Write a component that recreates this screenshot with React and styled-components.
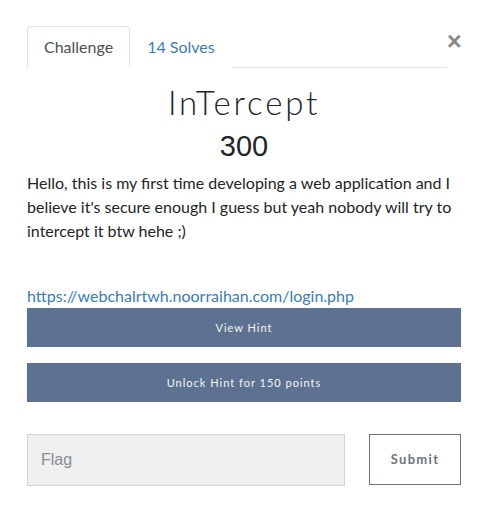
import React from 'react';
import styled, { createGlobalStyle } from 'styled-components';

const Global = createGlobalStyle`
  body {
    margin: 0;
    background: #fff;
    font-family: Lato, "Noto Sans", sans-serif;
    color: #212529;
  }
`;

const Modal = styled.div`
  padding: 26px 26px 0 27px;
`;

const Header = styled.div`
  display: flex;
  align-items: flex-start;
`;

const Tabs = styled.div`
  flex: 1;
  display: flex;
  border-bottom: 1px solid #dee2e6;
`;

const Tab = styled.div`
  padding: 8px 16px;
  font-size: 16px;
  line-height: 24px;
  margin-bottom: -1px;
  border: 1px solid ${({ active }) => (active ? '#dee2e6' : 'transparent')};
  border-bottom-color: ${({ active }) => (active ? '#fff' : 'transparent')};
  border-radius: 4px 4px 0 0;
  color: ${({ active }) => (active ? '#495057' : '#3a7dbb')};
  background: #fff;
`;

const Close = styled.div`
  width: 14px;
  font-family: "Liberation Sans", Arial, sans-serif;
  font-weight: bold;
  font-size: 25px;
  line-height: 30px;
  color: #888;
  text-align: right;
`;

const Body = styled.div`
  width: 434px;
`;

const Title = styled.h2`
  margin: 15px 0 0;
  text-align: center;
  font-weight: 300;
  font-size: 33px;
  line-height: 1.2;
  letter-spacing: 2.8px;
  color: #212529;
`;

const Points = styled.h4`
  margin: 6px 0 0;
  text-align: center;
  font-family: "Liberation Sans", Arial, sans-serif;
  font-weight: 400;
  font-size: 29px;
  line-height: 35px;
  color: #212529;
`;

const Description = styled.p`
  margin: 7px 0 41px;
  font-size: 16px;
  line-height: 24px;
`;

const Link = styled.a`
  display: block;
  font-size: 16px;
  line-height: 24px;
  color: #3a7dbb;
  text-decoration: none;
`;

const HintButton = styled.button`
  display: block;
  width: 100%;
  height: 39px;
  margin-bottom: 16px;
  border: none;
  background: #5c7290;
  color: #f4f4f4;
  font-family: Lato, sans-serif;
  font-size: 11px;
  letter-spacing: 1px;
`;

const FlagRow = styled.div`
  display: flex;
  gap: 24px;
  margin-top: 32px;
`;

const FlagInput = styled.input`
  flex: 0 0 318px;
  box-sizing: border-box;
  height: 52px;
  padding: 0 13px;
  border: 1px solid #d0d3d8;
  background: #efefef;
  font-family: "Liberation Sans", Arial, sans-serif;
  font-size: 16px;
  &::placeholder {
    color: #868e96;
  }
`;

const SubmitButton = styled.button`
  box-sizing: border-box;
  width: 92px;
  height: 51px;
  border: 1px solid #6c757d;
  background: #fff;
  color: #6c757d;
  font-family: Lato, sans-serif;
  font-weight: bold;
  font-size: 13px;
  letter-spacing: 1.3px;
`;

export default function App() {
  return (
    <>
      <Global />
      <Modal>
        <Header>
          <Tabs>
            <Tab active>Challenge</Tab>
            <Tab>14 Solves</Tab>
          </Tabs>
          <Close>×</Close>
        </Header>
        <Body>
          <Title>InTercept</Title>
          <Points>300</Points>
          <Description>
            Hello, this is my first time developing a web application and I believe it's secure
            enough I guess but yeah nobody will try to intercept it btw hehe ;)
          </Description>
          <Link href="#">https://webchalrtwh.noorraihan.com/login.php</Link>
          <HintButton>View Hint</HintButton>
          <HintButton>Unlock Hint for 150 points</HintButton>
          <FlagRow>
            <FlagInput placeholder="Flag" />
            <SubmitButton>Submit</SubmitButton>
          </FlagRow>
        </Body>
      </Modal>
    </>
  );
}
